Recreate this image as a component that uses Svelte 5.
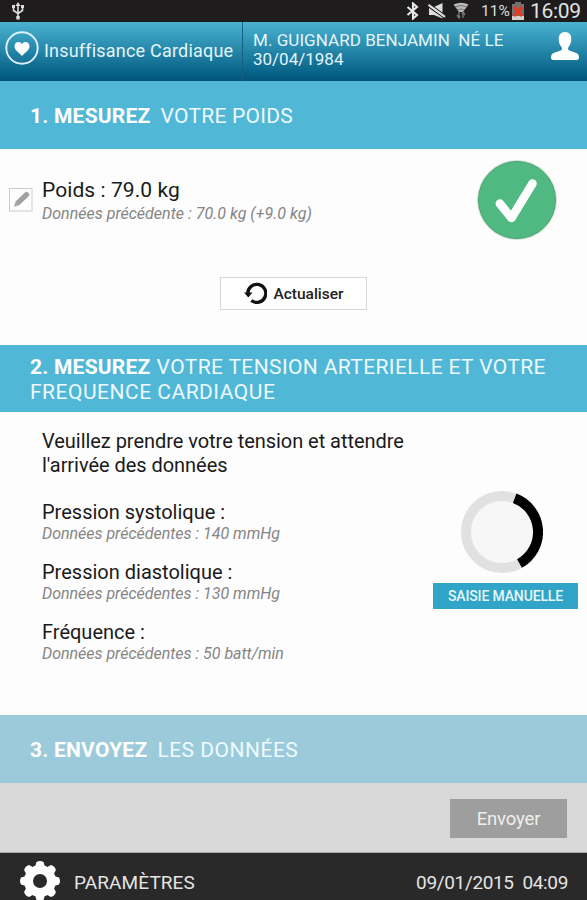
<script>
  const readings = [
    { name: 'Pression systolique :', previous: 'Données précédentes : 140 mmHg', cls: 'systolic' },
    { name: 'Pression diastolique :', previous: 'Données précédentes : 130 mmHg', cls: 'diastolic' },
    { name: 'Fréquence :', previous: 'Données précédentes : 50 batt/min', cls: 'pulse' }
  ];
  const teeth = [0, 45, 90, 135, 180, 225, 270, 315];
</script>

<div class="screen">
  <div class="status">
    <svg class="usb" width="16" height="20" viewBox="0 0 16 20" fill="none" stroke="#ddd" stroke-width="1.6">
      <path d="M8 3v13M3.500 5v4.500L8 12.500l4.500-3V5" />
      <path d="M8 1l2.500 4h-5zM6.300 15h3.400v3.500H6.300zM2 4h3v3H2zM11 4h3v3h-3z" fill="#ddd" stroke="none" />
    </svg>
    <div class="tray">
      <svg width="14" height="18" viewBox="0 0 14 18" fill="none" stroke="#e8e8e8" stroke-width="2.1">
        <path d="M1.500 5l9.500 8-4 3.500V1.500L11 5l-9.500 8" />
      </svg>
      <svg class="mute" width="18" height="18" viewBox="0 0 18 18">
        <path d="M1 5h5L14.500 1v15.500L6 13H1z" fill="#ddd" />
        <path d="M0 4.500l17 12" stroke="#1e1c1d" stroke-width="1.200" />
        <path d="M0 1l17 12" stroke="#1e1c1d" stroke-width="1.200" />
        <path d="M0.500 2.800l16.500 12" stroke="#ddd" stroke-width="2.200" />
      </svg>
      <svg class="wifi" width="16" height="18" viewBox="0 0 16 18">
        <path d="M0.500 2.500Q8 -1 15.500 2.500L10 10H6z" fill="#b9b9b9" />
        <path d="M2 5q6-3 12 0M4 8q4-2 8 0" fill="none" stroke="#555" stroke-width=".7" />
        <path d="M6 10v6m-2-3l2 3 1-2M10 16v-6m-1 2l1-2 2 3" fill="none" stroke="#777" stroke-width="1.400" />
      </svg>
      <span class="percent">11%</span>
      <svg class="battery" width="14" height="19" viewBox="0 0 14 19">
        <path d="M4 0h6v2h3v16H1V2h3z" fill="#77706e" />
        <path d="M1 14h12v4H1z" fill="#d5d0ce" />
        <path d="M3 5l8 9M11 5l-8 9" stroke="#e8381d" stroke-width="3" />
      </svg>
      <span class="clock">16:09</span>
    </div>
  </div>

  <header>
    <div class="brand">
      <svg width="34" height="34" viewBox="0 0 34 34">
        <circle cx="17" cy="17" r="15.700" fill="none" stroke="#dff2f8" stroke-width="1.900" />
        <path d="M17 25C14 21.500 9.500 19.500 9.500 15.300c0-4.800 5.800-5.700 7.500-2 1.700-3.700 7.500-2.800 7.500 2C24.500 19.500 20 21.500 17 25z" fill="#fff" />
      </svg>
      <span class="appname">Insuffisance Cardiaque</span>
    </div>
    <div class="patient">
      <div class="who"><span class="line1">M. GUIGNARD BENJAMIN&nbsp; NÉ LE</span><br /><span class="line2">30/04/1984</span></div>
      <svg width="28" height="28" viewBox="0 0 28 28" fill="#fff">
        <path d="M14 0c-4.400 0-6.300 3-6.300 7 0 4.300 1.500 6.300 3 8.500.8 1.500.2 2.700-1.700 3.300L2.500 21C.8 21.700 0 23.300 0 25.500 0 27 .7 28 2.300 28h23.400c1.600 0 2.300-1 2.300-2.500 0-2.200-.8-3.800-2.500-4.500L19 18.800c-1.900-.6-2.500-1.800-1.700-3.300 1.500-2.200 3-4.200 3-8.500 0-4-1.900-7-6.300-7z" />
      </svg>
    </div>
  </header>

  <h2 class="step one"><span><b>1. MESUREZ</b><i class="t1">VOTRE POIDS</i></span></h2>

  <section class="weight">
    <div class="row">
      <svg class="edit" width="24" height="24" viewBox="0 0 24 24">
        <rect x="0.500" y="0.500" width="22.500" height="22.500" fill="#fdfdfd" stroke="#ccc" />
        <path d="M5 19l1.500-5.500L16.500 4q1.500-.8 3 .8t.8 3L10.500 17z" fill="#a8a8a8" />
        <path d="M7.500 14.500L17 5.500M9.500 16l9.500-9" stroke="#888" stroke-width=".7" />
      </svg>
      <div class="value">
        <div class="big">Poids : 79.0 kg</div>
        <div class="prev w">Données précédente : 70.0 kg (+9.0 kg)</div>
      </div>
      <svg class="ok" width="82" height="82" viewBox="0 0 82 82">
        <circle cx="41" cy="41" r="40" fill="#d9dfd5" />
        <circle cx="41" cy="41" r="38.500" fill="#50b982" stroke="#43a673" stroke-width="1" />
        <path d="M23.800 44.500L35.500 59 56.500 24.500" fill="none" stroke="#fff" stroke-width="8.500" stroke-linecap="round" stroke-linejoin="round" />
      </svg>
    </div>
    <button class="refresh">
      <svg width="24" height="23" viewBox="0 0 24 23">
        <path d="M4.800 12A9 9 0 1 1 8.300 18.500" fill="none" stroke="#111" stroke-width="3.300" />
        <path d="M1 10.500h8.500L5.300 15.500z" fill="#111" />
      </svg>
      <span>Actualiser</span>
    </button>
  </section>

  <h2 class="step two"><span><b>2. MESUREZ</b><i class="t2">VOTRE TENSION ARTERIELLE ET VOTRE</i><br /><i class="t3">FREQUENCE CARDIAQUE</i></span></h2>

  <section class="pressure">
    <div class="texts">
      <p><span class="p1">Veuillez prendre votre tension et attendre</span><br /><span class="p2">l'arrivée des données</span></p>
      {#each readings as r}
        <div class="reading {r.cls}">
          <div class="name">{r.name}</div>
          <div class="prev">{r.previous}</div>
        </div>
      {/each}
    </div>
    <div class="wait">
      <svg width="82" height="82" viewBox="0 0 82 82" fill="none" stroke-width="10">
        <circle cx="41" cy="41" r="36" fill="#f7f7f7" stroke="#e1e1e1" />
        <path d="M53.700 7.300A36 36 0 0 1 58.500 72.500" stroke="#000" />
      </svg>
      <button class="manual"><span>SAISIE MANUELLE</span></button>
    </div>
  </section>

  <h2 class="step three"><span><b>3. ENVOYEZ</b><i class="t4">LES DONNÉES</i></span></h2>

  <div class="send"><button><span>Envoyer</span></button></div>

  <footer>
    <svg width="42" height="42" viewBox="-21 -21 42 42" fill="#fff">
      {#each teeth as a}
        <path d="M-5 -14L-3.500 -19Q0 -21 3.500 -19L5 -14z" transform="rotate({a})" />
      {/each}
      <circle r="11.500" fill="none" stroke="#fff" stroke-width="9" />
    </svg>
    <span class="params">PARAMÈTRES</span>
    <span class="date">09/01/2015&nbsp; 04:09</span>
  </footer>
</div>

<style>
  :global(body) { margin: 0; }
  .screen { width: 587px; height: 900px; display: flex; flex-direction: column; overflow: hidden; background: #fdfdfd; font-family: Roboto, "Liberation Sans", sans-serif; color: #1a1a1a; white-space: nowrap; }
  svg { display: block; flex: none; }
  button { font-family: inherit; padding: 0; border-radius: 0; display: flex; align-items: center; justify-content: center; white-space: nowrap; }
  .status { height: 22px; flex: none; background: #1e1c1d; display: flex; justify-content: space-between; padding: 0 5px 0 10px; color: #ddd; box-sizing: border-box; }
  .usb { margin-top: 1px; }
  .tray { display: flex; align-items: center; }
  .mute { margin-left: 8px; }
  .wifi { margin-left: 7px; }
  .percent { font-size: 15.500px; margin-left: 12px; width: 29px; line-height: 22px; }
  .battery { margin-left: 1px; }
  .clock { font-size: 21px; line-height: 22px; margin-left: 5px; width: 52px; color: #e2e2e2; letter-spacing: -.3px; }
  header { height: 59px; flex: none; display: flex; background: linear-gradient(#4ab1d0, #2b8eb1 40%, #015a80 95%, #075273); color: #e4f5fa; }
  .brand { width: 243px; box-sizing: border-box; border-right: 1px solid #17607f; padding: 9px 0 0 5px; display: flex; }
  .appname { font-size: 18px; line-height: 39px; margin-left: 5px; letter-spacing: .2px; }
  .patient { flex: 1; display: flex; justify-content: space-between; padding: 10px 8px 0 10px; }
  .who { font-size: 17px; line-height: 19px; margin-top: -1px; }
  .line1 { letter-spacing: .05px; }
  .step { margin: 0; flex: none; box-sizing: border-box; background: #51b7d6; color: #eefaff; font-weight: 400; font-size: 21px; line-height: 25px; padding-left: 30px; display: flex; align-items: center; }
  .step b { color: #fff; letter-spacing: .22px; }
  .step i { font-style: normal; letter-spacing: .38px; }
  .step .t1 { letter-spacing: .25px; }
  .step .t3 { letter-spacing: .5px; }
  .step .t4 { letter-spacing: .5px; }
  .t1, .t4 { margin-left: 10px; }
  .t2 { margin-left: 6px; }
  .one { height: 68px; padding-top: 2px; }
  .two { height: 67px; padding-top: 3px; }
  .three { height: 68px; background: #9bcbda; padding-top: 2px; }
  .weight { height: 196px; flex: none; display: flex; flex-direction: column; align-items: center; }
  .row { align-self: stretch; display: flex; padding: 10px 29px 0 9px; height: 82px; }
  .edit { margin-top: 29px; }
  .value { flex: 1; margin: 18px 0 0 9px; }
  .big { font-size: 21px; line-height: 26px; letter-spacing: .07px; }
  .prev { font-size: 16px; line-height: 19px; font-style: italic; color: #858585; }
  .value .prev { line-height: 21px; letter-spacing: .01px; }
  .refresh { margin-top: 36px; width: 147px; height: 33px; background: #fff; border: 1px solid #d6d6d6; color: #222; font-size: 15.500px; font-weight: 500; gap: 6px; }
  .pressure { height: 303px; flex: none; display: flex; justify-content: space-between; padding-right: 9px; }
  .texts { padding: 17px 0 0 42px; }
  p { margin: 0 0 23px; font-size: 20px; line-height: 24px; letter-spacing: -.04px; }
  .name { font-size: 20px; line-height: 24px; }
  .reading { height: 60px; }
  .reading .prev { line-height: 19px; letter-spacing: -.02px; }
  .wait { width: 145px; padding-top: 79px; display: flex; flex-direction: column; align-items: center; }
  .wait svg { margin-right: 7px; }
  .manual { margin-top: 10px; width: 145px; height: 26px; border: 0; background: #30a5c8; color: #e8f7fb; font-size: 14px; font-weight: 500; letter-spacing: -.15px; }
  .send { height: 70px; flex: none; box-sizing: border-box; border-bottom: 1px solid #aaa; background: #d8d8d8; display: flex; justify-content: flex-end; padding: 16px 20px 0 0; }
  .send button { width: 117px; height: 39px; border: 0; background: #9e9e9e; color: #efefef; font-size: 18.500px; letter-spacing: -.15px; }
  footer { flex: 1; min-height: 0; background: #292929; color: #e4e4e4; display: flex; box-sizing: border-box; height: 47px; padding: 7px 19px 0 19px; font-size: 19px; line-height: 45px; }
  .params { margin-left: 13px; letter-spacing: .1px; }
  .date { margin-left: auto; letter-spacing: -.35px; }
</style>
